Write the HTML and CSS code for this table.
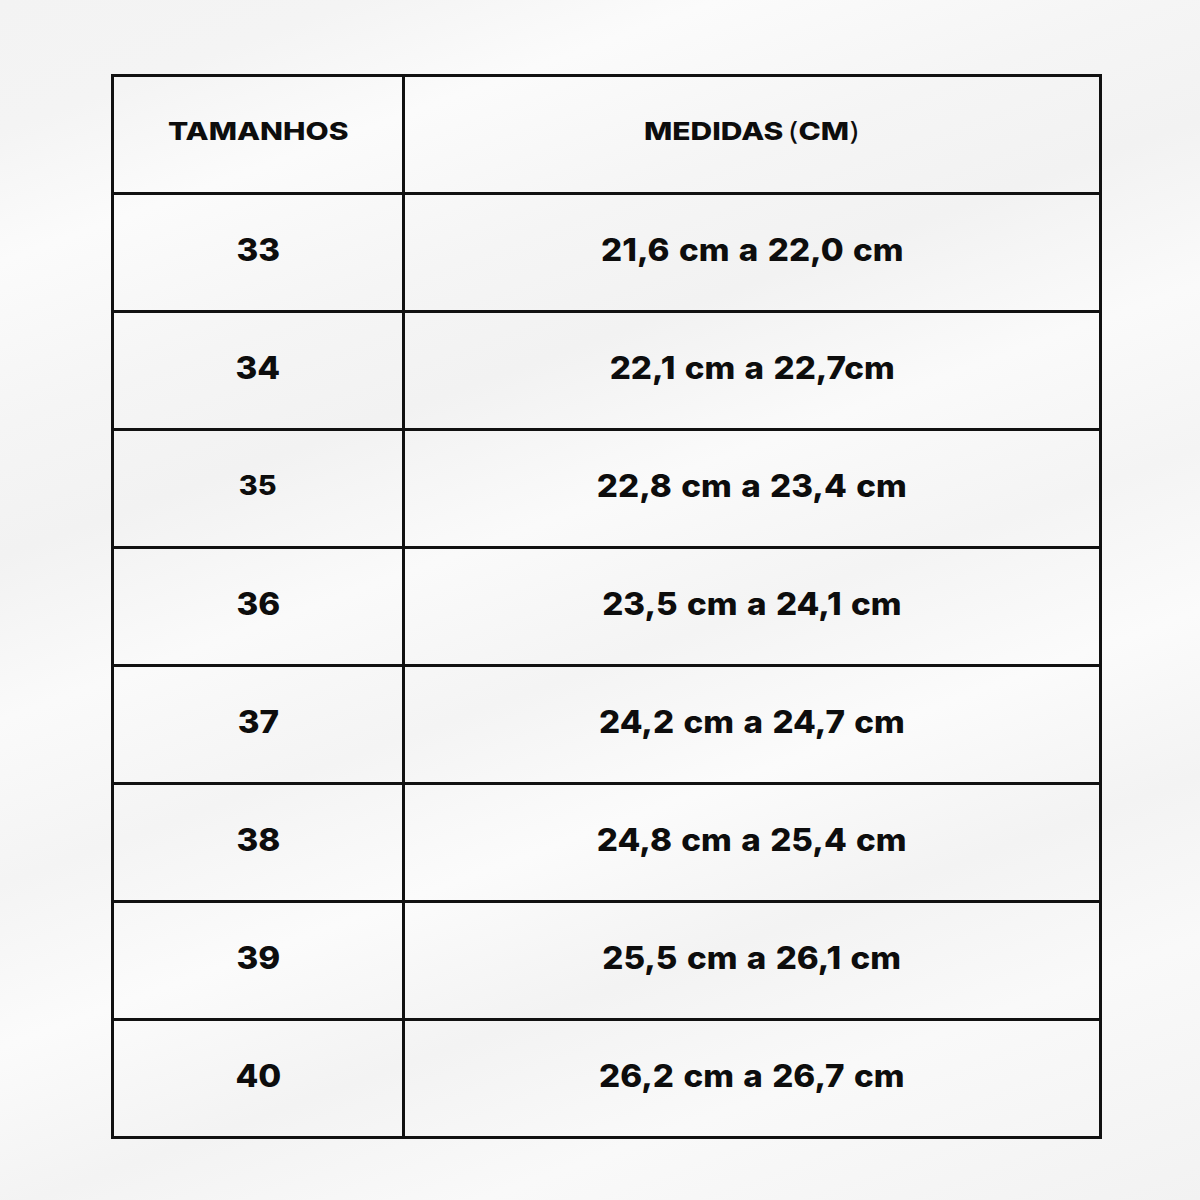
FILE: index.html
```html
<!DOCTYPE html>
<html lang="pt">
<head>
<meta charset="utf-8">
<title>Tabela de medidas</title>
<link rel="stylesheet" href="styles.css">
</head>
<body>
<main class="page">
  <table class="sizes">
    <thead>
      <tr><th class="col-size"><span class="wide">TAMANHOS</span></th><th class="col-measure"><span class="wide">MEDIDAS <span class="paren">(</span>CM<span class="paren">)</span></span></th></tr>
    </thead>
    <tbody>
      <tr><td><span class="num">33</span></td><td><span class="num">21,6 cm a 22,0 cm</span></td></tr>
      <tr><td><span class="num">34</span></td><td><span class="num">22,1 cm a 22,7cm</span></td></tr>
      <tr><td class="small"><span class="num">35</span></td><td><span class="num">22,8 cm a 23,4 cm</span></td></tr>
      <tr><td><span class="num">36</span></td><td><span class="num">23,5 cm a 24,1 cm</span></td></tr>
      <tr><td><span class="num">37</span></td><td><span class="num">24,2 cm a 24,7 cm</span></td></tr>
      <tr><td><span class="num">38</span></td><td><span class="num">24,8 cm a 25,4 cm</span></td></tr>
      <tr><td><span class="num">39</span></td><td><span class="num">25,5 cm a 26,1 cm</span></td></tr>
      <tr><td><span class="num">40</span></td><td><span class="num">26,2 cm a 26,7 cm</span></td></tr>
    </tbody>
  </table>
</main>
</body>
</html>
```
FILE: styles.css
```css
html, body {
  margin: 0;
  padding: 0;
}
body {
  width: 1200px;
  height: 1200px;
  background:
    linear-gradient(160deg,
      #f3f3f3 0%, #f4f4f4 8%, #fbfbfb 16%, #f5f5f5 26%, #f2f2f2 34%,
      #fafafa 44%, #f4f4f4 54%, #fbfbfb 64%, #f3f3f3 74%, #f9f9f9 84%, #f2f2f2 100%);
  font-family: Inter, "Liberation Sans", sans-serif;
  color: #0d0d0d;
}
.page {
  padding: 74px 0 0 111px;
}
.sizes {
  border-collapse: collapse;
  border: 3px solid #111;
  width: 991px;
}
.sizes th, .sizes td {
  border: 3px solid #111;
  text-align: center;
  vertical-align: middle;
  height: 109px;
  padding: 0 0 6px 0;
  font-weight: 800;
  line-height: 1;
}
.col-size {
  width: 288px;
}
.sizes th {
  font-size: 25px;
}
.wide {
  display: inline-block;
  transform: scaleX(1.2);
  word-spacing: -2px;
}
.sizes td {
  font-size: 31px;
}
.num {
  display: inline-block;
  transform: scaleX(1.07);
  word-spacing: 2px;
}
.sizes td.small {
  font-size: 27px;
}
.paren {
  font-weight: 400;
}
```
